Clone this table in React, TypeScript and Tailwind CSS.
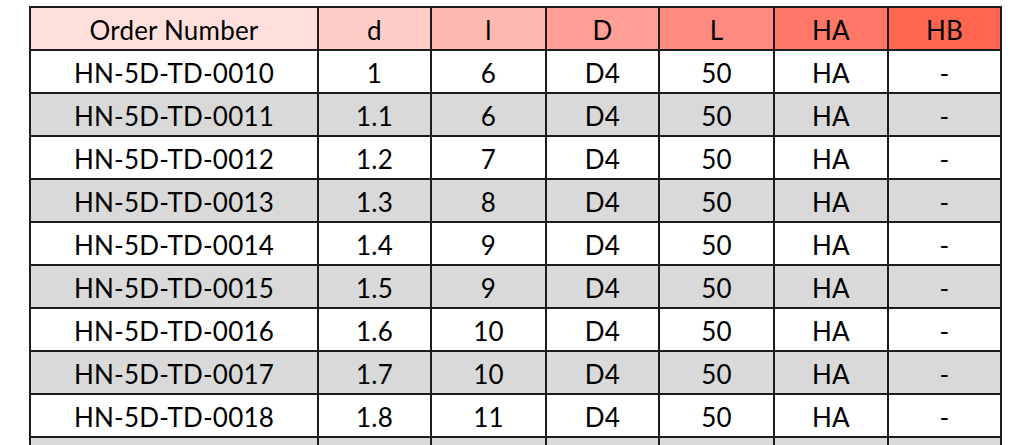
const headers = [
  { label: "Order Number", bg: "bg-[#ffdfdc]" },
  { label: "d", bg: "bg-[#ffcdc8]" },
  { label: "l", bg: "bg-[#ffb8b0]" },
  { label: "D", bg: "bg-[#ff9f95]" },
  { label: "L", bg: "bg-[#ff8a7f]" },
  { label: "HA", bg: "bg-[#ff7767]" },
  { label: "HB", bg: "bg-[#ff6650]" },
];

const rows = [
  ["HN-5D-TD-0010", "1", "6", "D4", "50", "HA", "-"],
  ["HN-5D-TD-0011", "1.1", "6", "D4", "50", "HA", "-"],
  ["HN-5D-TD-0012", "1.2", "7", "D4", "50", "HA", "-"],
  ["HN-5D-TD-0013", "1.3", "8", "D4", "50", "HA", "-"],
  ["HN-5D-TD-0014", "1.4", "9", "D4", "50", "HA", "-"],
  ["HN-5D-TD-0015", "1.5", "9", "D4", "50", "HA", "-"],
  ["HN-5D-TD-0016", "1.6", "10", "D4", "50", "HA", "-"],
  ["HN-5D-TD-0017", "1.7", "10", "D4", "50", "HA", "-"],
  ["HN-5D-TD-0018", "1.8", "11", "D4", "50", "HA", "-"],
  // next row only peeks in at the bottom edge, text falls below the fold
  ["", "", "", "", "", "", ""],
];

const widths = ["w-[288px]", "w-[113px]", "w-[115px]", "w-[113px]", "w-[115px]", "w-[114px]", "w-[113px]"];

export default function App() {
  return (
    <div className="h-[445px] w-[1024px] overflow-hidden bg-white pl-[29px] pt-[6px] font-['Lato',sans-serif] text-[26px] leading-none tracking-[0.2px] text-black">
      <table className="table-fixed border-collapse">
        <colgroup>
          {widths.map((w, i) => (
            <col key={i} className={w} />
          ))}
        </colgroup>
        <thead>
          <tr className="h-[43px]">
            {headers.map((h) => (
              <th key={h.label} className={`border-2 border-[#1c1c1c] p-0 pt-[3px] text-center font-normal ${h.bg}`}>
                {h.label}
              </th>
            ))}
          </tr>
        </thead>
        <tbody>
          {rows.map((r, i) => (
            <tr key={i} className={`h-[43px] ${i % 2 ? "bg-[#d9d9d9]" : "bg-white"}`}>
              {r.map((c, j) => (
                <td key={j} className="border-2 border-[#1c1c1c] p-0 pt-[3px] text-center">
                  {c}
                </td>
              ))}
            </tr>
          ))}
        </tbody>
      </table>
    </div>
  );
}
